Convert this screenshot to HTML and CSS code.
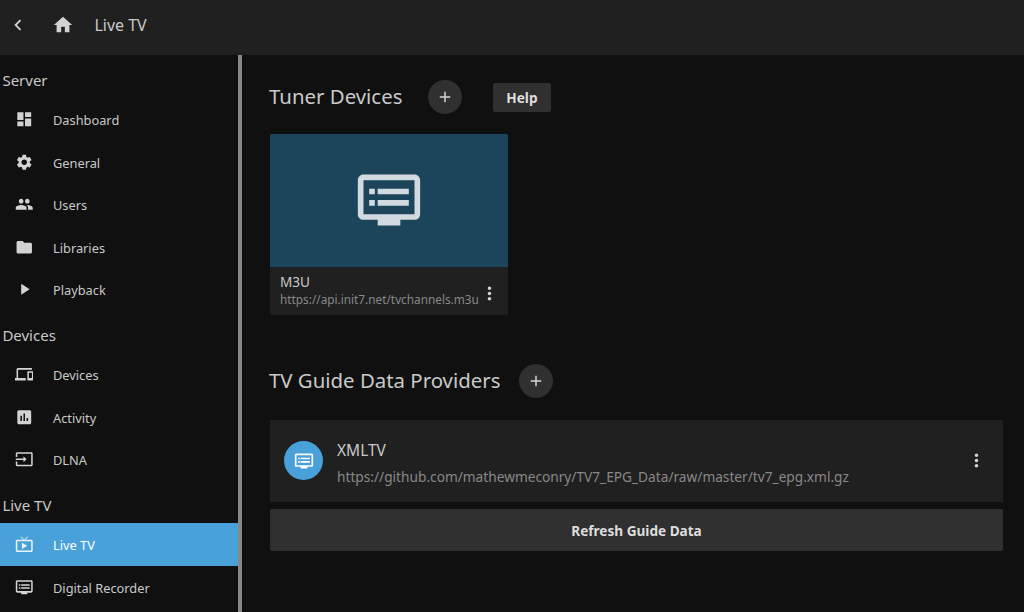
FILE: index.html
```html
<!DOCTYPE html>
<html lang="en">
<head>
<meta charset="utf-8">
<title>Live TV</title>
<link rel="stylesheet" href="styles.css">
</head>
<body>
<svg class="sprite" aria-hidden="true">
  <symbol id="back" viewBox="0 0 24 24"><path d="M15.41 7.41 14 6l-6 6 6 6 1.41-1.41L10.83 12z"/></symbol>
  <symbol id="home" viewBox="0 0 24 24"><path d="M10 20v-6h4v6h5v-8h3L12 3 2 12h3v8z"/></symbol>
  <symbol id="dashboard" viewBox="0 0 24 24"><path d="M3 13h8V3H3v10zm0 8h8v-6H3v6zm10 0h8V11h-8v10zm0-18v6h8V3h-8z"/></symbol>
  <symbol id="settings" viewBox="0 0 24 24"><path d="M19.14 12.94c.04-.3.06-.61.06-.94 0-.32-.02-.64-.07-.94l2.03-1.58c.18-.14.23-.41.12-.61l-1.92-3.32c-.12-.22-.37-.29-.59-.22l-2.39.96c-.5-.38-1.03-.7-1.62-.94l-.36-2.54c-.04-.24-.24-.41-.48-.41h-3.84c-.24 0-.43.17-.47.41l-.36 2.54c-.59.24-1.13.57-1.62.94l-2.39-.96c-.22-.08-.47 0-.59.22L2.74 8.87c-.12.21-.08.47.12.61l2.03 1.58c-.05.3-.09.63-.09.94s.02.64.07.94l-2.03 1.58c-.18.14-.23.41-.12.61l1.92 3.32c.12.22.37.29.59.22l2.39-.96c.5.38 1.03.7 1.62.94l.36 2.54c.05.24.24.41.48.41h3.84c.24 0 .44-.17.47-.41l.36-2.54c.59-.24 1.13-.56 1.62-.94l2.39.96c.22.08.47 0 .59-.22l1.92-3.32c.12-.22.07-.47-.12-.61l-2.01-1.58zM12 15.6c-1.98 0-3.6-1.62-3.6-3.6s1.62-3.6 3.6-3.6 3.6 1.62 3.6 3.6-1.62 3.6-3.6 3.6z"/></symbol>
  <symbol id="people" viewBox="0 0 24 24"><path d="M16 11c1.66 0 2.99-1.34 2.99-3S17.66 5 16 5s-3 1.34-3 3 1.34 3 3 3zm-8 0c1.66 0 2.99-1.34 2.99-3S9.66 5 8 5 5 6.34 5 8s1.34 3 3 3zm0 2c-2.33 0-7 1.17-7 3.5V19h14v-2.5c0-2.33-4.67-3.5-7-3.5zm8 0c-.29 0-.62.02-.97.05 1.16.84 1.97 1.97 1.97 3.45V19h6v-2.5c0-2.33-4.67-3.5-7-3.5z"/></symbol>
  <symbol id="folder" viewBox="0 0 24 24"><path d="M10 4H4c-1.1 0-1.99.9-1.99 2L2 18c0 1.1.9 2 2 2h16c1.1 0 2-.9 2-2V8c0-1.1-.9-2-2-2h-8l-2-2z"/></symbol>
  <symbol id="play" viewBox="0 0 24 24"><path d="M8 5v14l11-7z"/></symbol>
  <symbol id="devices" viewBox="0 0 24 24"><path d="M4 6h18V4H4c-1.1 0-2 .9-2 2v11H0v3h14v-3H4V6zm19 2h-6c-.55 0-1 .45-1 1v10c0 .55.45 1 1 1h6c.55 0 1-.45 1-1V9c0-.55-.45-1-1-1zm-1 9h-4v-7h4v7z"/></symbol>
  <symbol id="chart" viewBox="0 0 24 24"><path d="M19 3H5c-1.1 0-2 .9-2 2v14c0 1.1.9 2 2 2h14c1.1 0 2-.9 2-2V5c0-1.1-.9-2-2-2zM9 17H7v-7h2v7zm4 0h-2V7h2v10zm4 0h-2v-4h2v4z"/></symbol>
  <symbol id="input" viewBox="0 0 24 24"><path d="M21 3.01H3c-1.1 0-2 .9-2 2V9h2V4.99h18v14.03H3V15H1v4.01c0 1.1.9 1.98 2 1.98h18c1.1 0 2-.88 2-1.98v-14c0-1.11-.9-2-2-2zM11 16l4-4-4-4v3H1v2h10v3z"/></symbol>
  <symbol id="livetv" viewBox="0 0 24 24"><path d="M21 6h-7.59l3.29-3.29L16 2l-4 4-4-4-.7.71L10.59 6H3c-1.1 0-2 .89-2 2v12c0 1.1.9 2 2 2h18c1.1 0 2-.9 2-2V8c0-1.11-.9-2-2-2zm0 14H3V8h18v12zM9 10v8l7-4z"/></symbol>
  <symbol id="dvr" viewBox="0 0 24 24"><path d="M21 3H3c-1.1 0-2 .9-2 2v12c0 1.1.9 2 2 2h5v2h8v-2h5c1.1 0 1.99-.9 1.99-2L23 5c0-1.1-.9-2-2-2zm0 14H3V5h18v12zm-2-9H8v2h11V8zm0 4H8v2h11v-2zM7 8H5v2h2V8zm0 4H5v2h2v-2z"/></symbol>
  <symbol id="add" viewBox="0 0 24 24"><path d="M19 13h-6v6h-2v-6H5v-2h6V5h2v6h6v2z"/></symbol>
  <symbol id="more" viewBox="0 0 24 24"><path d="M12 8c1.1 0 2-.9 2-2s-.9-2-2-2-2 .9-2 2 .9 2 2 2zm0 2c-1.1 0-2 .9-2 2s.9 2 2 2 2-.9 2-2-.9-2-2-2zm0 6c-1.1 0-2 .9-2 2s.9 2 2 2 2-.9 2-2-.9-2-2-2z"/></symbol>
</svg>
<div class="app">
  <header class="topbar">
    <svg class="icon back"><use href="#back"/></svg>
    <svg class="icon home"><use href="#home"/></svg>
    <h1 class="page-title">Live TV</h1>
  </header>
  <div class="body">
    <nav class="sidebar">
      <h2 class="nav-heading">Server</h2>
      <a class="nav-item"><svg class="icon nav-icon"><use href="#dashboard"/></svg><span>Dashboard</span></a>
      <a class="nav-item"><svg class="icon nav-icon"><use href="#settings"/></svg><span>General</span></a>
      <a class="nav-item"><svg class="icon nav-icon"><use href="#people"/></svg><span>Users</span></a>
      <a class="nav-item"><svg class="icon nav-icon"><use href="#folder"/></svg><span>Libraries</span></a>
      <a class="nav-item"><svg class="icon nav-icon"><use href="#play"/></svg><span>Playback</span></a>
      <h2 class="nav-heading">Devices</h2>
      <a class="nav-item"><svg class="icon nav-icon"><use href="#devices"/></svg><span>Devices</span></a>
      <a class="nav-item"><svg class="icon nav-icon"><use href="#chart"/></svg><span>Activity</span></a>
      <a class="nav-item"><svg class="icon nav-icon"><use href="#input"/></svg><span>DLNA</span></a>
      <h2 class="nav-heading">Live TV</h2>
      <a class="nav-item active"><svg class="icon nav-icon"><use href="#livetv"/></svg><span>Live TV</span></a>
      <a class="nav-item"><svg class="icon nav-icon"><use href="#dvr"/></svg><span>Digital Recorder</span></a>
    </nav>
    <main class="content">
      <section class="tuners">
        <div class="section-head">
          <h2 class="section-title">Tuner Devices</h2>
          <button class="add"><svg class="icon"><use href="#add"/></svg></button>
          <button class="help">Help</button>
        </div>
        <article class="card">
          <div class="card-image"><svg class="icon card-icon"><use href="#dvr"/></svg></div>
          <div class="card-footer">
            <div class="card-text">
              <div class="card-name">M3U</div>
              <div class="card-url">https://api.init7.net/tvchannels.m3u</div>
            </div>
            <svg class="icon more"><use href="#more"/></svg>
          </div>
        </article>
      </section>
      <section class="providers">
        <div class="section-head">
          <h2 class="section-title">TV Guide Data Providers</h2>
          <button class="add"><svg class="icon"><use href="#add"/></svg></button>
        </div>
        <div class="provider">
          <div class="provider-badge"><svg class="icon"><use href="#dvr"/></svg></div>
          <div class="provider-text">
            <div class="provider-name">XMLTV</div>
            <div class="provider-url">https://github.com/mathewmeconry/TV7_EPG_Data/raw/master/tv7_epg.xml.gz</div>
          </div>
          <svg class="icon more"><use href="#more"/></svg>
        </div>
        <button class="refresh">Refresh Guide Data</button>
      </section>
    </main>
  </div>
</div>
</body>
</html>
```
FILE: styles.css
```css
* { box-sizing: border-box; }
body {
  margin: 0;
  background: #101010;
  color: #c9c9c9;
  font-family: "Noto Sans", sans-serif;
}
h1, h2 { margin: 0; font-weight: 400; }
button {
  border: 0;
  padding: 0;
  background: #303030;
  color: #dedede;
  font-family: inherit;
  font-weight: 700;
}
.sprite { display: none; }
.icon { display: block; flex: none; fill: #d3d3d3; }
.app { display: flex; flex-direction: column; height: 612px; overflow: hidden; }

.topbar {
  display: flex;
  align-items: center;
  flex: none;
  height: 55px;
  padding: 0 0 5px 7px;
  background: #202020;
}
.back { width: 22px; height: 22px; }
.home { width: 22px; height: 22px; margin-left: 23.4px; }
.page-title { margin-left: 20px; font-size: 16px; line-height: 22px; }

.body { display: flex; flex: 1; min-height: 0; }
.sidebar {
  flex: none;
  width: 242px;
  padding-top: 0.5px;
  border-right: 4px solid #888;
  overflow: hidden;
}
.nav-heading {
  height: 42.5px;
  padding: 3px 0 0 2.4px;
  font-size: 15px;
  line-height: 42px;
}
.nav-item {
  display: flex;
  align-items: center;
  height: 42.5px;
  padding-left: 14.5px;
  font-size: 12.8px;
  line-height: 18px;
}
.nav-item span { padding-top: 2px; }
.nav-icon { width: 18.5px; height: 18.5px; margin-right: 20px; }
.active { background: #48a1d9; color: #fff; }
.active .icon { fill: #e8f3fa; }

.content { flex: 1; padding: 25px 21px 0 28px; }
.section-head { display: flex; align-items: center; height: 34px; }
.section-title { margin: -2px 0 0 -1px; font-size: 20.4px; line-height: 28px; }
.add {
  display: grid;
  place-items: center;
  width: 34px;
  height: 34px;
  border-radius: 50%;
}
.add .icon { width: 18px; height: 18px; }
.tuners .add { margin-left: 25.5px; }
.providers .add { margin-left: 18.5px; }
.help {
  width: 58px;
  height: 29px;
  margin-left: 31px;
  border-radius: 2px;
  font-size: 13.6px;
}

.card {
  width: 238px;
  margin-top: 20px;
  border-radius: 2px;
  overflow: hidden;
  background: #202020;
}
.card-image { display: grid; place-items: center; height: 133px; padding: 0 1px 1px 0; background: #1c455b; }
.card-icon { width: 68px; height: 68px; }
.card-image .icon { fill: #d1dade; }
.card-footer {
  display: flex;
  align-items: center;
  justify-content: space-between;
  height: 48px;
  padding: 0 10px 0 10px;
}
.card-name { font-size: 13.6px; line-height: 18px; }
.card-text { padding-bottom: 1px; }
.card-url { color: #888; font-size: 11.8px; line-height: 17px; white-space: nowrap; }
.more { width: 21px; height: 21px; }
.card .more { margin-right: -1.5px; margin-top: 4px; }

.providers { margin-top: 49px; }
.provider {
  display: flex;
  align-items: center;
  height: 82px;
  margin-top: 22px;
  padding: 0 16px 0 14px;
  background: #202020;
}
.provider .more { margin-bottom: 1px; }
.provider-badge {
  display: grid;
  place-items: center;
  width: 39px;
  height: 39px;
  margin-bottom: 1px;
  border-radius: 50%;
  background: #48a1d9;
}
.provider-badge .icon { width: 20px; height: 20px; fill: #fff; }
.provider-text { flex: 1; padding: 5px 0 0 14px; }
.provider-name { font-size: 15.5px; line-height: 26px; }
.provider-url { color: #888; font-size: 13.7px; line-height: 27px; }
.refresh {
  display: block;
  width: 100%;
  height: 42px;
  margin-top: 7px;
  border-radius: 2px;
  font-size: 13.6px;
}
```
